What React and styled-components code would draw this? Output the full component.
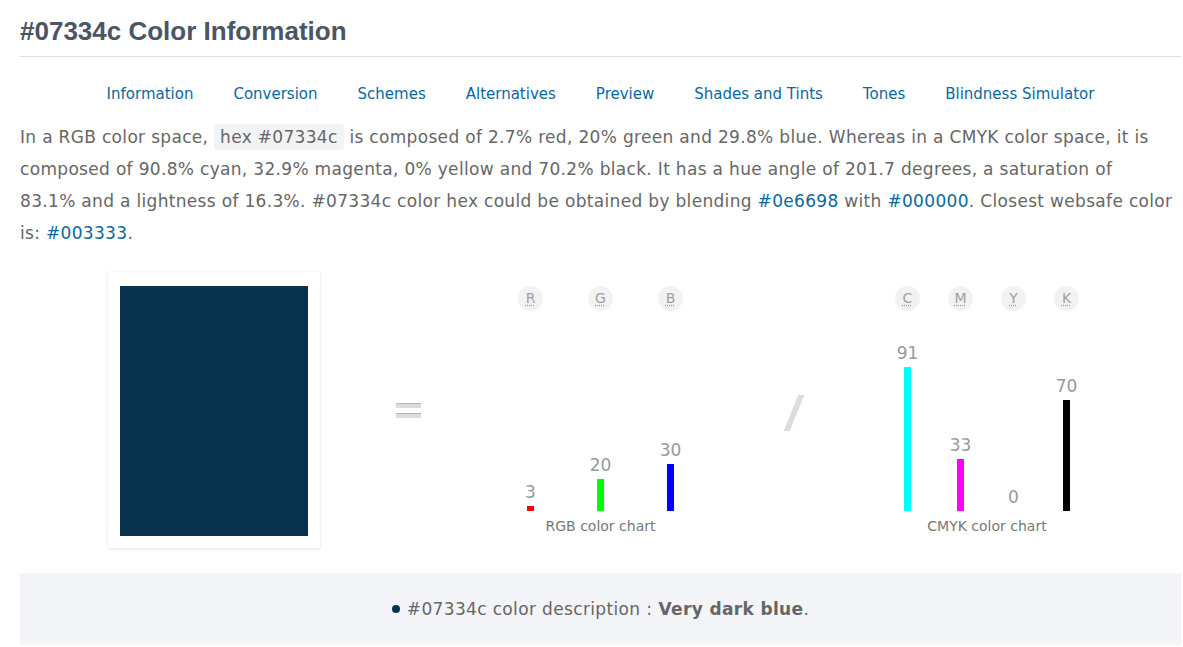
import React from 'react'
import styled, { createGlobalStyle } from 'styled-components'

const Global = createGlobalStyle`
html, body {
    margin: 0;
    padding: 0;
    background: #fff;
}
body {
    font-family: "DejaVu Sans", Verdana, sans-serif;
}
`

const Page = styled.div`
width: 1161px;
padding-left: 20px;
`

const Title = styled.h1`
margin: 0;
padding-top: 17px;
padding-bottom: 11px;
font-family: "Liberation Sans", Arial, sans-serif;
font-weight: bold;
font-size: 26px;
line-height: 28px;
color: #4b5563;
border-bottom: 1px solid #dcdcdc;
`

const Nav = styled.nav`
display: flex;
justify-content: center;
gap: 40px;
padding-top: 27px;
`

const NavLink = styled.a`
font-size: 15px;
line-height: 20px;
color: #0b67a0;
text-decoration: none;
`

const Para = styled.p`
margin: 17px 0 0 0;
font-size: 17px;
line-height: 32px;
letter-spacing: 0.32px;
color: #666;
`

const Code = styled.span`
background: #f2f3f5;
border-radius: 4px;
padding: 3px 6px;
`

const Link = styled.a`
color: #0b67a0;
text-decoration: none;
`

const ChartRow = styled.div`
display: grid;
grid-template-columns: 368px 40px 345px 42px 344px;
align-items: start;
margin-top: 23px;
`

const SwatchCard = styled.div`
margin-left: 88px;
width: 188px;
padding: 14px 12px 12px 12px;
background: #fff;
box-shadow: 0 1px 3px rgba(0,0,0,0.12), 0 0 1px rgba(0,0,0,0.05);
`

const Swatch = styled.div`
height: 250px;
background: ${props => props.color};
`

const Sign = styled.div`
display: flex;
flex-direction: column;
align-items: center;
gap: 5px;
margin-top: 131px;
`

const Bar = styled.div`
width: 25px;
height: 5px;
background: #dcdcdc;
border-top: 1px solid #b5b5b5;
box-sizing: border-box;
`

const Slash = styled.div`
width: 6px;
height: 36px;
margin: 123px auto 0 auto;
background: #dcdcdc;
transform: skewX(-22deg);
`

const Chart = styled.div`
display: flex;
flex-direction: column;
align-items: center;
margin-top: 14px;
`

const Columns = styled.div`
display: flex;
height: 225px;
`

const Column = styled.div`
width: ${props => props.w}px;
display: flex;
flex-direction: column;
align-items: center;
`

const Letter = styled.abbr`
width: 25px;
height: 25px;
border-radius: 50%;
background: #f2f2f2;
color: #a0a0a0;
font-size: 14px;
line-height: 25px;
text-align: center;
text-decoration: underline dotted;
text-underline-offset: 2px;
`

const Grow = styled.div`
flex: 1;
`

const Value = styled.div`
font-size: 17px;
line-height: 20px;
color: #999;
margin-bottom: 4px;
`

const ValueBar = styled.div`
width: 7px;
background: ${props => props.color};
`

const ChartLabel = styled.div`
margin-top: 6px;
font-size: 14px;
line-height: 18px;
color: #777;
`

const Desc = styled.div`
margin-top: 25px;
height: 72px;
background: #f3f4f8;
display: flex;
align-items: center;
justify-content: center;
font-size: 17px;
letter-spacing: 0.35px;
color: #666;
`

const Dot = styled.span`
display: inline-block;
width: 8px;
height: 8px;
border-radius: 50%;
background: #07334c;
margin-right: 7px;
`

const links = ['Information', 'Conversion', 'Schemes', 'Alternatives', 'Preview', 'Shades and Tints', 'Tones', 'Blindness Simulator']

const rgb = [
    { k: 'R', v: 3, c: '#ff0000' },
    { k: 'G', v: 20, c: '#00ff00' },
    { k: 'B', v: 30, c: '#0000ff' },
]

const cmyk = [
    { k: 'C', v: 91, c: '#00ffff' },
    { k: 'M', v: 33, c: '#ff00ff' },
    { k: 'Y', v: 0, c: '#ffff00' },
    { k: 'K', v: 70, c: '#000000' },
]

const BarChart = ({ data, w, label }) => (
    <Chart>
        <Columns>
            {data.map(d => (
                <Column w={w} key={d.k}>
                    <Letter>{d.k}</Letter>
                    <Grow />
                    <Value>{d.v}</Value>
                    <ValueBar color={d.c} style={{ height: Math.round(d.v * 1.58) }} />
                </Column>
            ))}
        </Columns>
        <ChartLabel>{label}</ChartLabel>
    </Chart>
)

export default function App() {
    return (
        <Page>
            <Global />
            <Title>#07334c Color Information</Title>
            <Nav>
                {links.map(l => <NavLink key={l} href="#">{l}</NavLink>)}
            </Nav>
            <Para>
                In a RGB color space, <Code>hex #07334c</Code> is composed of 2.7% red, 20% green and 29.8% blue. Whereas in a CMYK color space, it is<br />
                composed of 90.8% cyan, 32.9% magenta, 0% yellow and 70.2% black. It has a hue angle of 201.7 degrees, a saturation of<br />
                83.1% and a lightness of 16.3%. #07334c color hex could be obtained by blending <Link href="#">#0e6698</Link> with <Link href="#">#000000</Link>. Closest websafe color<br />
                is: <Link href="#">#003333</Link>.
            </Para>
            <ChartRow>
                <SwatchCard>
                    <Swatch color="#07334c" />
                </SwatchCard>
                <Sign>
                    <Bar />
                    <Bar />
                </Sign>
                <BarChart data={rgb} w={70} label="RGB color chart" />
                <Slash />
                <BarChart data={cmyk} w={53} label="CMYK color chart" />
            </ChartRow>
            <Desc>
                <Dot />#07334c color description : <b>&nbsp;Very dark blue</b>.
            </Desc>
        </Page>
    )
}
